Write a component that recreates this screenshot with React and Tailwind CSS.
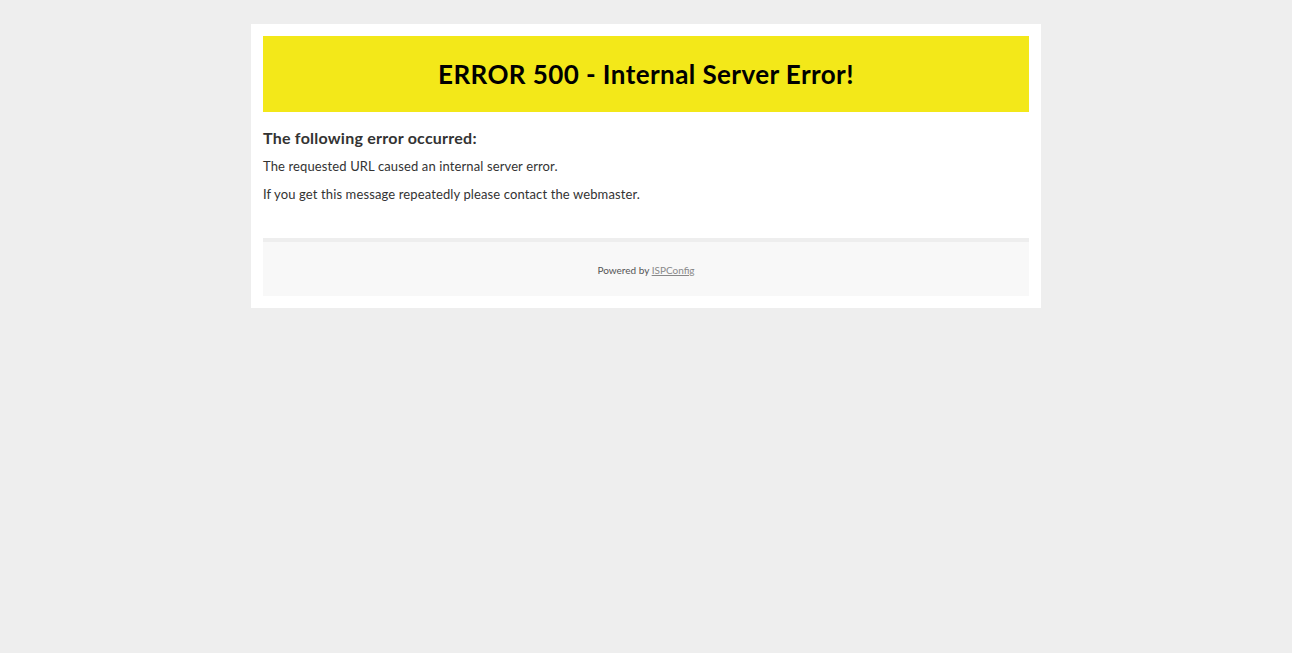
export default function App() {
    return (
        <div className="min-h-[653px] bg-[#eeeeee] pt-6 font-['Lato','Noto_Sans',sans-serif] text-[#333333]">
            <div className="mx-auto w-[790px] bg-white p-3">
                {/* Header */}
                <div className="flex h-[76px] items-center justify-center bg-[#f3e819]">
                    <h1 className="text-[26px] font-bold tracking-[0.42px] text-black">ERROR 500 - Internal Server Error!</h1>
                </div>

                {/* Content */}
                <div className="pt-[16px] pb-[35px]">
                    <h2 className="text-[16px] font-bold leading-[20px] tracking-[0.24px]">The following error occurred:</h2>
                    <p className="mt-[9px] text-[13px] leading-[18px] tracking-[0.12px]">The requested URL caused an internal server error.</p>
                    <p className="mt-[10px] text-[13px] leading-[18px] tracking-[0.12px]">If you get this message repeatedly please contact the webmaster.</p>
                </div>

                {/* Footer */}
                <div className="flex h-[58px] items-center justify-center border-t-4 border-[#eeeeee] bg-[#f8f8f8] pt-[2px]">
                    <p className="text-[10px] text-[#555555]">
                        Powered by <a href="#" className="text-[#888888] underline">ISPConfig</a>
                    </p>
                </div>
            </div>
        </div>
    );
}
